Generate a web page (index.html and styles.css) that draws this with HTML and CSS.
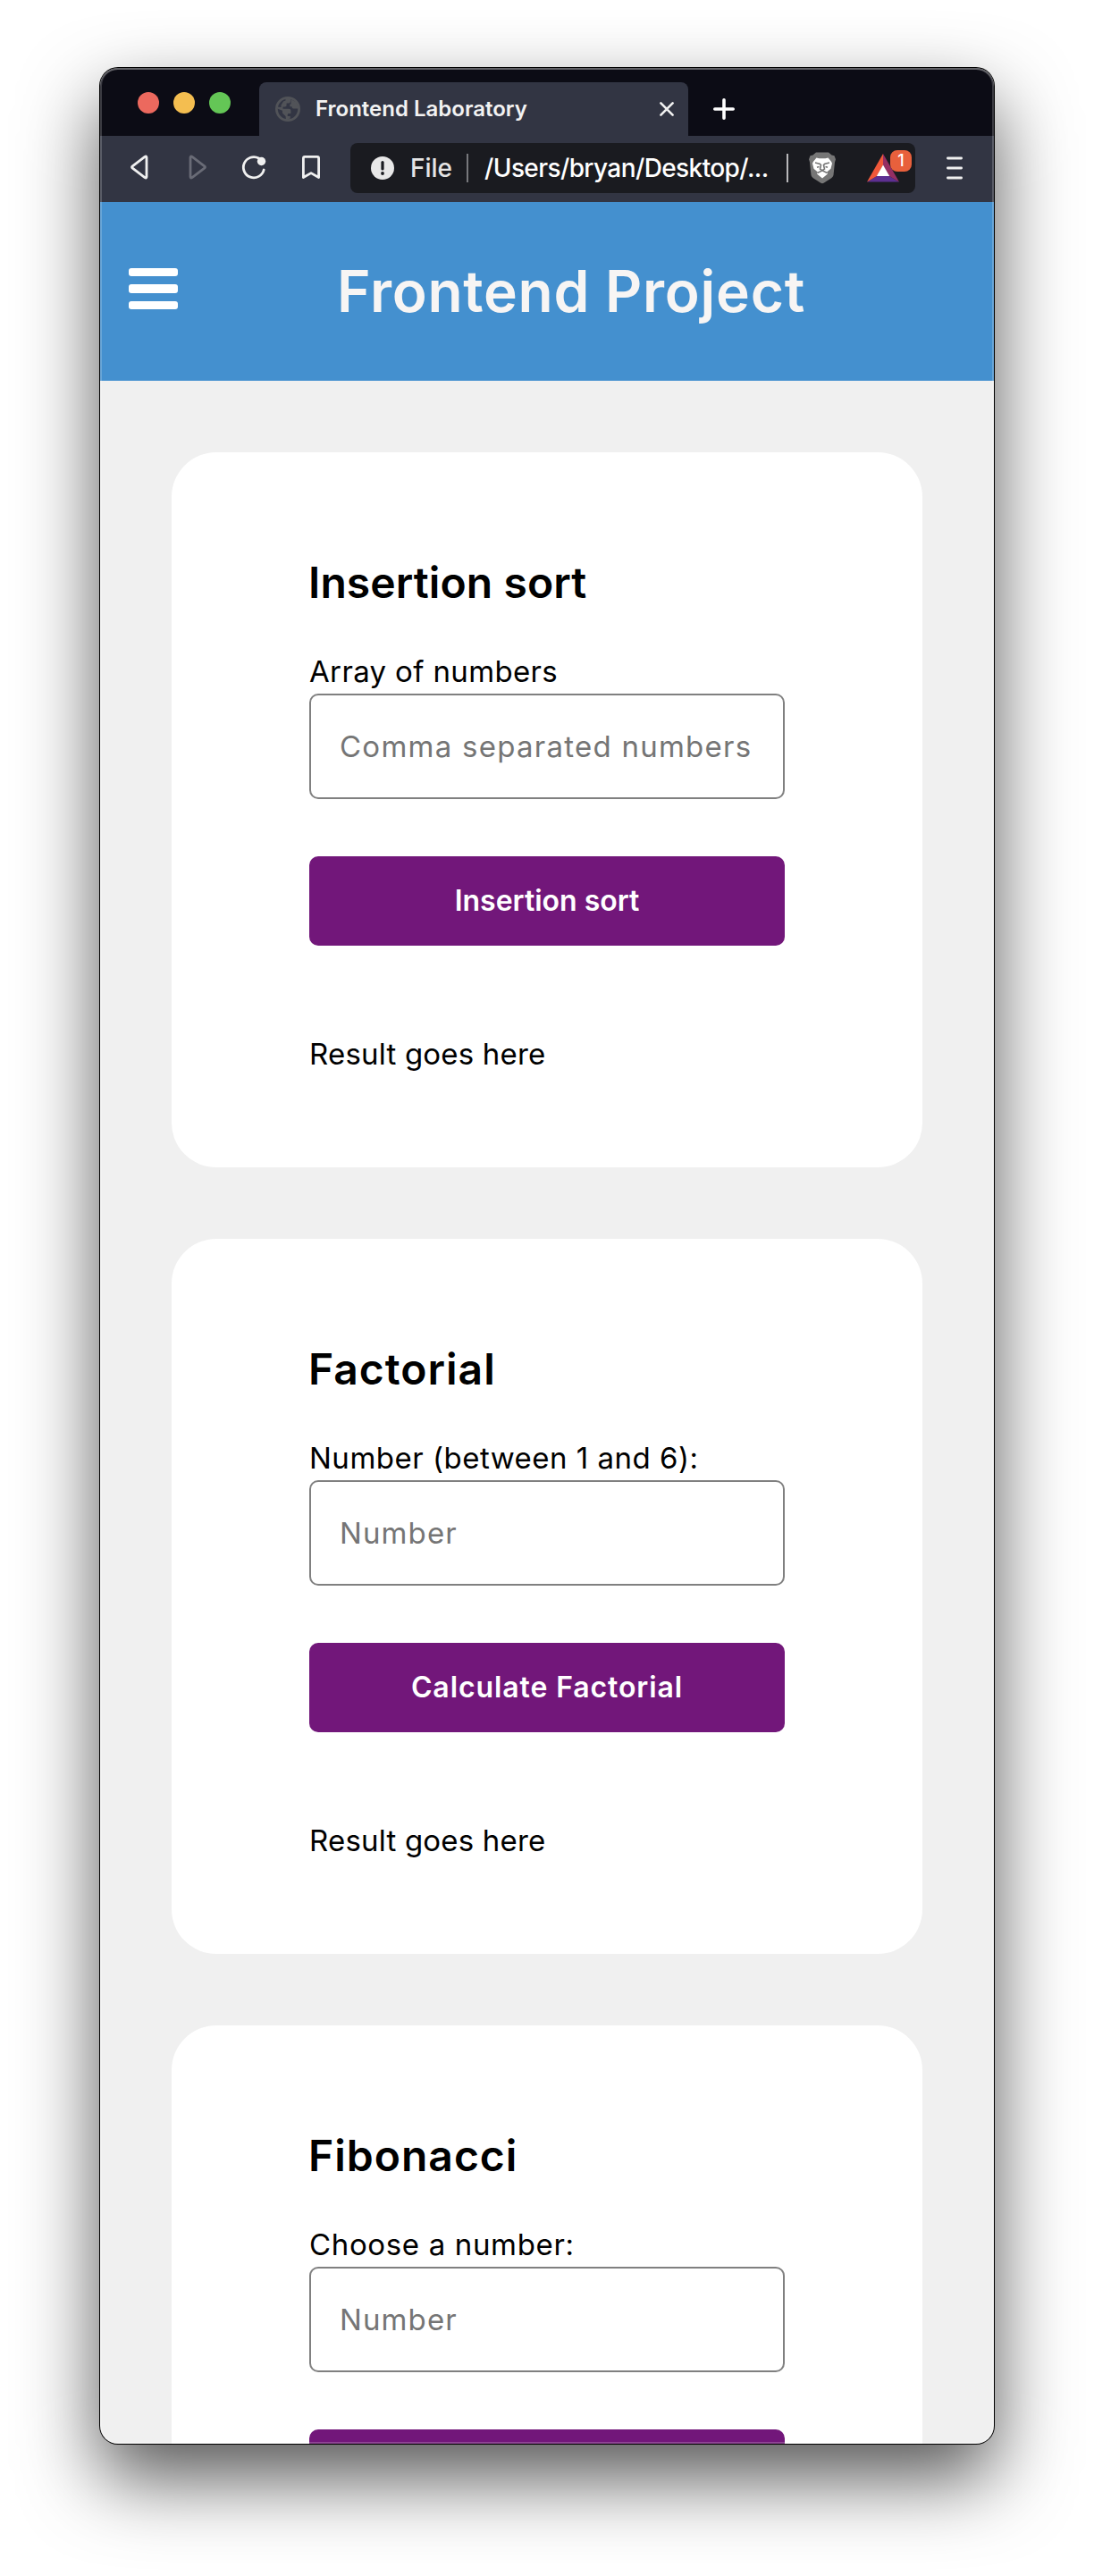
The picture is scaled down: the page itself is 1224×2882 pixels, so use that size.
FILE: index.html
```
<!DOCTYPE html>
<html lang="en">
<head>
<meta charset="utf-8">
<title>Frontend Laboratory</title>
<link rel="stylesheet" href="styles.css">
</head>
<body>
<div class="window">
  <div class="tabstrip">
    <div class="lights"><i class="light red"></i><i class="light yellow"></i><i class="light green"></i></div>
    <div class="tab">
      <svg class="globe" width="28" height="28" viewBox="0 0 28 28"><circle cx="14" cy="14" r="12.6" fill="none" stroke="#515358" stroke-width="2.8"/><path fill="#515358" d="M17 2v3.200c0 1.600-1 2.300-2.600 2.300h-1.800v2.300c0 1-.7 1.600-1.700 1.600H8.500v2.300h6.600c1.500 0 2.300.8 2.300 2.100v3.200h-2.200c-.9 0-1.500.6-1.500 1.500v1.600h3v2.400L12 26.500 11.500 22 8 18.500v-2.700L1.500 13.200 2 11.500 6.500 12V9.500L9 5.500 11.500 4.500V2zM17.500 3l6 3.500 3 7h-5.300c-1.800 0-2.700-.9-2.700-2.300h-2.200V8.500h1.200z"/></svg>
      <span class="tab-title">Frontend Laboratory</span>
      <svg class="close" width="16" height="16" viewBox="0 0 16 16"><path d="M1.400 1.400l13.200 13.200M14.600 1.400L1.400 14.600" stroke="#f0f0f0" stroke-width="2.600" stroke-linecap="round"/></svg>
    </div>
    <svg class="plus" width="24" height="24" viewBox="0 0 24 24"><path d="M12 1.800v20.400M1.800 12h20.400" stroke="#fff" stroke-width="3.600" stroke-linecap="round"/></svg>
  </div>
  <div class="toolbar">
    <div class="nav">
      <svg width="20" height="28" viewBox="0 0 20 28"><path d="M2.300 12.800L16 2.400q2-1.200 2 .8v21.600q0 2-2 .8L2.300 15.200q-1.600-1.200 0-2.400z" fill="none" stroke="#f0f0f0" stroke-width="2.800"/></svg>
      <svg width="20" height="28" viewBox="0 0 20 28"><path d="M17.700 12.800L4 2.400q-2-1.200-2 .8v21.600q0 2 2 .8l13.700-10.400q1.600-1.200 0-2.400z" fill="none" stroke="#696b76" stroke-width="2.800"/></svg>
      <svg width="28" height="28" viewBox="0 0 28 28"><path d="M19.500 4A11.600 11.600 0 1 0 25.200 17" fill="none" stroke="#f0f0f0" stroke-width="2.800" stroke-linecap="round"/><circle cx="22.500" cy="7.500" r="4.700" fill="#f0f0f0"/></svg>
      <svg width="20" height="28" viewBox="0 0 20 28"><path d="M1.400 25.500V4q0-1.600 1.600-1.600h14q1.600 0 1.600 1.600v21.500L10 20.600z" fill="none" stroke="#f0f0f0" stroke-width="2.800" stroke-linejoin="round"/></svg>
    </div>
    <div class="address">
      <svg class="info" width="26" height="26" viewBox="0 0 26 26"><circle cx="13" cy="13" r="13" fill="#e8e8e8"/><path d="M13 6.500v7.500" stroke="#1a1b20" stroke-width="3.200" stroke-linecap="round"/><circle cx="13" cy="19" r="1.900" fill="#1a1b20"/></svg>
      <span class="scheme">File</span>
      <i class="rule"></i>
      <span class="path">/Users/bryan/Desktop/...</span>
      <i class="rule light-rule"></i>
      <svg class="lion" width="32" height="36" viewBox="0 0 32 36"><path fill="#767676" d="M9 .5h14l3.500 3 3 .8 1.500 4-1 3.200-1.500 14.500q-.5 2-2.300 3.300L18 34.600q-2 1.500-4 0l-8.200-5.300Q4 28 3.500 26L2 11.500 1 8.300l1.500-4 3-.8z"/><path fill="#fff" d="M9.500 6.500l3 .7h7l3-.7 3.500 4.300 1 2-1.500 6-4.300 3.700.8 2L16 29.400l-6-4.900.8-2-4.300-3.700-1.500-6 1-2z"/><path fill="none" stroke="#767676" stroke-width="1.600" d="M8 12l5.500 1.500 1 1.300-1 4.400 2.500 1.400 2.500-1.400-1-4.400 1-1.300L24 12M10.500 23.500L16 20.800l5.500 2.700M10 17.200l2.500-.8M22 17.200l-2.500-.8"/></svg>
      <div class="rewards">
        <svg width="36" height="32" viewBox="0 0 36 32"><path fill="#5d2f91" d="M0 31.500L11 25h14l11 6.500z"/><path fill="#f0583a" d="M18 0v13l-7 12L0 31.500z"/><path fill="#952e63" d="M18 0v13l7 12 11 6.500z"/><path fill="#fff" d="M18 12.500L25.200 25H10.800z"/></svg>
        <span class="badge">1</span>
      </div>
    </div>
    <svg class="menu" width="18" height="26" viewBox="0 0 18 26"><path d="M1.400 2h15.200M1.400 13h15.200M1.400 24h15.200" stroke="#f0f0f0" stroke-width="2.800" stroke-linecap="round"/></svg>
  </div>
  <header class="banner">
    <div class="burger"><i></i><i></i><i></i></div>
    <h1>Frontend Project</h1>
  </header>
  <main>
    <section class="card sort">
      <h2>Insertion sort</h2>
      <label for="array">Array of numbers</label>
      <input id="array" placeholder="Comma separated numbers">
      <button>Insertion sort</button>
      <p>Result goes here</p>
    </section>
    <section class="card factorial">
      <h2>Factorial</h2>
      <label for="fact">Number (between 1 and 6):</label>
      <input id="fact" placeholder="Number">
      <button>Calculate Factorial</button>
      <p>Result goes here</p>
    </section>
    <section class="card fibonacci">
      <h2>Fibonacci</h2>
      <label for="fib">Choose a number:</label>
      <input id="fib" placeholder="Number">
      <button></button>
    </section>
  </main>
</div>
</body>
</html>
```
FILE: styles.css
```
* { box-sizing: border-box; }

html { overflow: hidden; }

body {
  margin: 0;
  height: 2882px;
  padding: 76px 112px 148px;
  overflow: hidden;
  background: #fff;
  font-family: Inter, "Liberation Sans", sans-serif;
  color: #000;
}

svg { display: block; flex: none; }

.window {
  position: relative;
  display: flex;
  flex-direction: column;
  width: 1000px;
  height: 2658px;
  overflow: hidden;
  border-radius: 20px;
  background: #f0f0f0;
  box-shadow: 0 0 0 1px #000, 0 38px 86px rgba(0, 0, 0, .67);
}

/* Thin highlight along the inner window edge */
.window::after {
  content: "";
  position: absolute;
  inset: 0;
  border-radius: 20px;
  box-shadow: inset 0 0 0 2px rgba(255, 255, 255, .2), inset 0 2px 0 rgba(255, 255, 255, .2);
  pointer-events: none;
}

.tabstrip {
  display: flex;
  flex: none;
  height: 76px;
  background: #0c0c15;
}

.lights {
  display: flex;
  gap: 16px;
  width: 178px;
  padding: 27px 0 0 42px;
}

.light { width: 24px; height: 24px; border-radius: 50%; }
.red { background: #ec695e; }
.yellow { background: #f4be50; }
.green { background: #64c656; }

.tab {
  display: flex;
  align-items: center;
  width: 480px;
  height: 60px;
  margin-top: 16px;
  padding: 0 16px 0 18px;
  border-radius: 8px 8px 0 0;
  background: #323543;
}

.tab-title {
  flex: 1;
  padding-left: 17px;
  font-size: 24px;
  font-weight: 600;
  line-height: 30px;
  color: #f2f2f2;
}

.plus { margin: 34px 0 0 28px; }

.toolbar {
  display: flex;
  flex: none;
  height: 74px;
  padding-left: 34px;
  background: #323543;
}

.nav {
  display: flex;
  width: 246px;
  padding-top: 21px;
}

.nav svg:nth-child(2) { margin-left: 45px; }
.nav svg:nth-child(3) { margin-left: 39px; }
.nav svg:nth-child(4) { margin-left: 40px; }

.address {
  display: flex;
  align-items: center;
  width: 632px;
  height: 56px;
  margin-top: 8px;
  padding-left: 23px;
  border-radius: 8px;
  background: #1a1b20;
  font-size: 28px;
  font-weight: 500;
  line-height: 36px;
  white-space: nowrap;
}

.scheme { width: 63px; margin-left: 18px; color: #e4e4e4; }
.rule { width: 2px; height: 32px; background: #77787c; }
.path { width: 338px; margin-left: 18px; letter-spacing: -.6px; color: #fff; }
.light-rule { background: #b8b8ba; }
.lion { margin-left: 22px; }

.rewards { position: relative; margin-left: 34px; }

.badge {
  position: absolute;
  top: -4px;
  left: 26px;
  width: 24px;
  height: 24px;
  border-radius: 8px;
  background: #e8603c;
  color: #fff;
  font-size: 18px;
  line-height: 24px;
  text-align: center;
}

.menu { margin: 23px 0 0 35px; }

.banner {
  display: flex;
  align-items: center;
  flex: none;
  height: 200px;
  padding-left: 32px;
  background: #4490cf;
}

.burger { display: flex; flex-direction: column; gap: 9px; width: 55px; margin-bottom: 6px; }
.burger i { height: 9.300px; border-radius: 3px; background: #fff; }

h1 {
  margin: 0 0 0 178px;
  font-size: 64px;
  font-weight: 600;
  line-height: 96px;
  letter-spacing: .75px;
  color: #f7f5f4;
}

main {
  display: flex;
  flex-direction: column;
  gap: 80px;
  padding: 80px;
}

.card {
  display: flex;
  flex-direction: column;
  flex: none;
  height: 800px;
  padding: 110px 154px 0;
  border-radius: 50px;
  background: #fff;
  font-size: 33px;
  line-height: 48px;
}

h2 {
  margin: 0 0 39px -1px;
  font-size: 48px;
  font-weight: 600;
  line-height: 72px;
}

.card input {
  height: 118px;
  margin: 1px 0 64px;
  padding: 0 32px;
  border: 2px solid #808080;
  border-radius: 10px;
  background: #fff;
  font: 33px Inter, sans-serif;
}

.card input::placeholder { color: #757575; opacity: 1; }

.card button {
  height: 100px;
  margin: 0;
  padding: 0 0 2px;
  border: 0;
  border-radius: 10px;
  background: #72177a;
  color: #fff;
  font: 600 32px Inter, sans-serif;
}

.card p { margin: 97px 0 0; letter-spacing: .2px; }

.sort h2 { letter-spacing: .1px; }
.sort label { letter-spacing: .35px; }
.sort input { letter-spacing: 1.250px; }
.sort button { letter-spacing: 0; }
.factorial h2 { letter-spacing: 1px; }
.factorial label { letter-spacing: .5px; }
.factorial input, .fibonacci input { letter-spacing: 1.100px; }
.factorial button { letter-spacing: .9px; }
.fibonacci h2 { letter-spacing: 1px; }
.fibonacci label { letter-spacing: .65px; }
```
